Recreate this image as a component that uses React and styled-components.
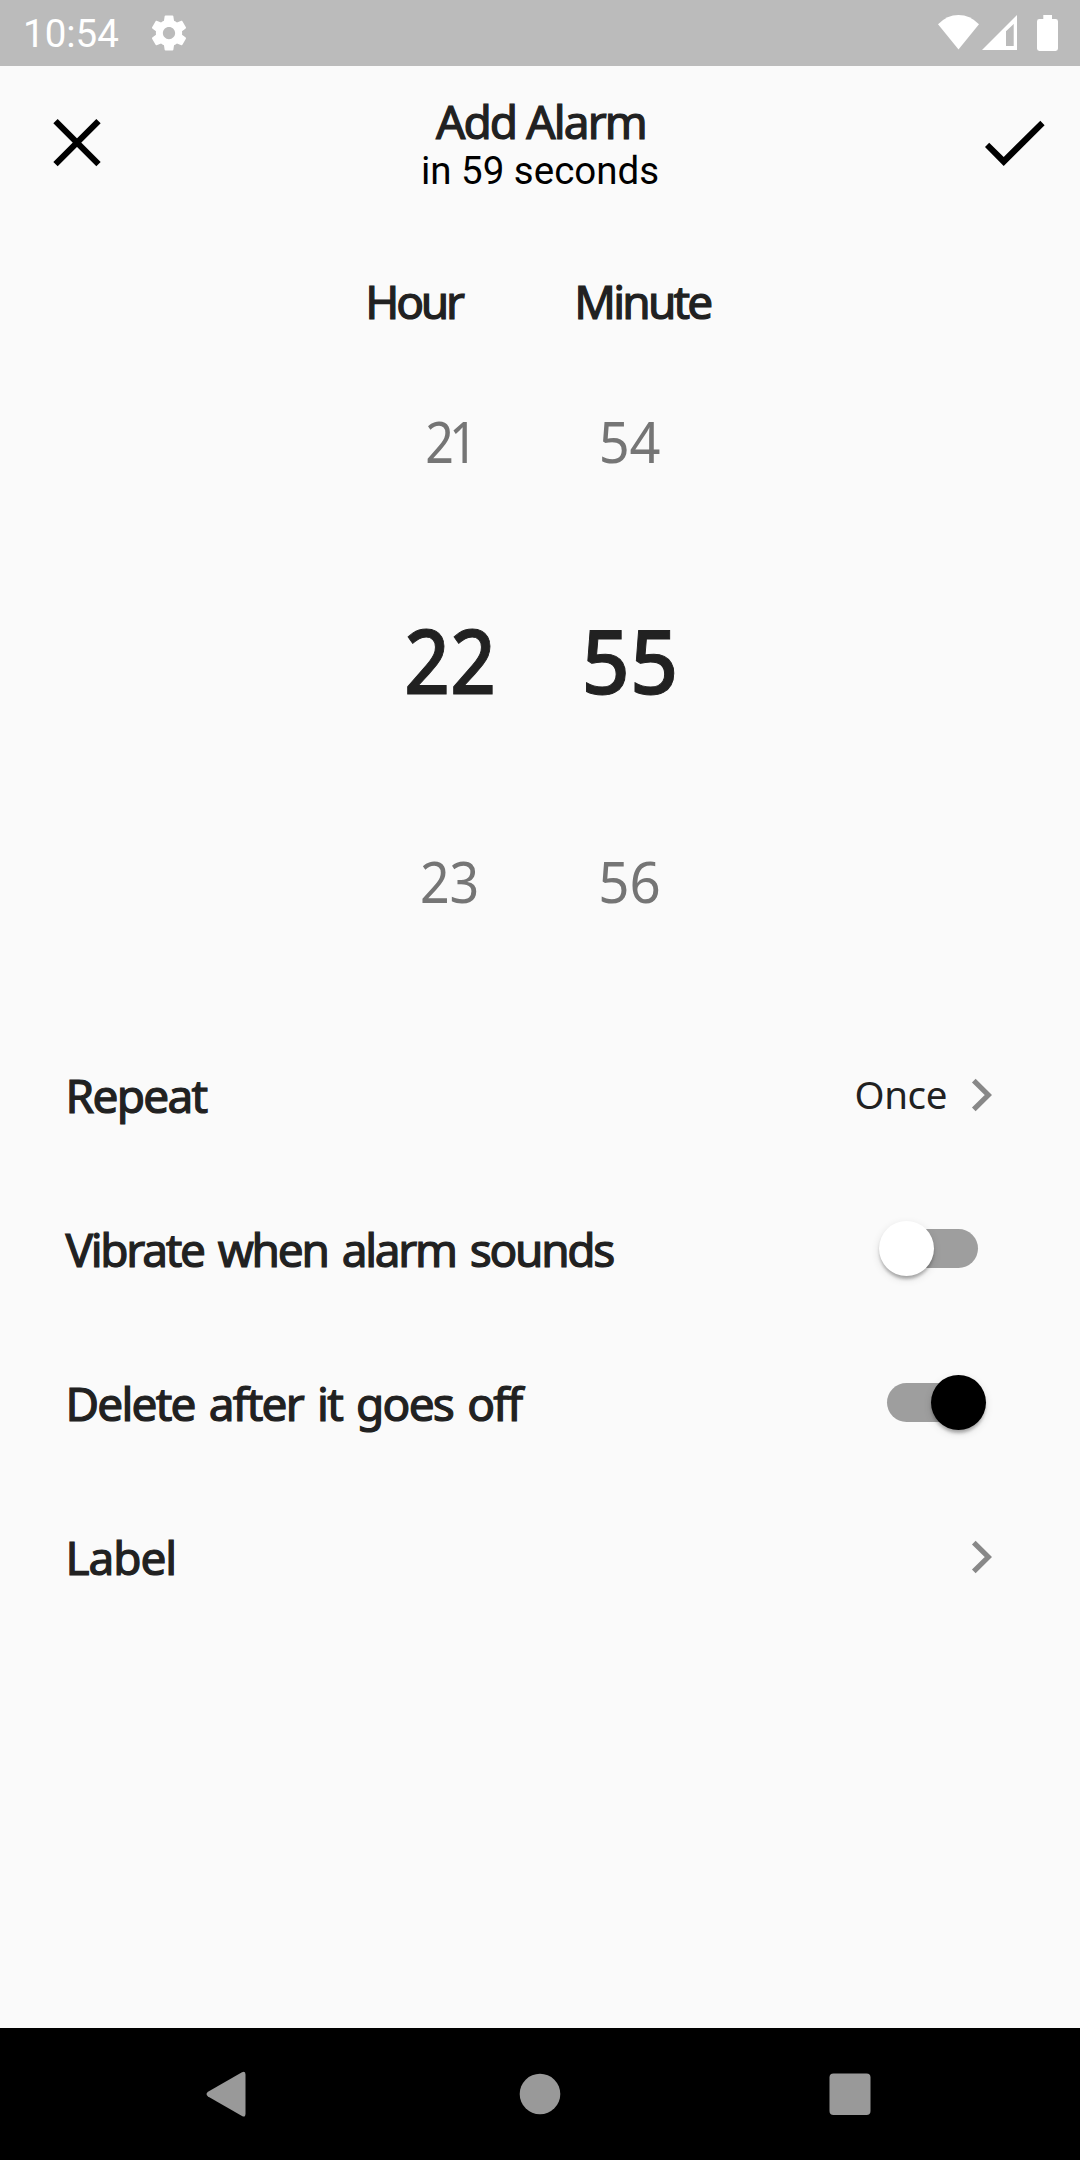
import React, { useState } from "react";
import styled, { createGlobalStyle } from "styled-components";

const GlobalStyle = createGlobalStyle`
  * { box-sizing: border-box; }
  body {
    margin: 0;
    background: #fafafa;
    color: #212121;
    font-family: "Noto Sans", "Open Sans", sans-serif;
  }
`;

const Screen = styled.div`
  width: 1080px;
  height: 2160px;
  display: flex;
  flex-direction: column;
  background: #fafafa;
  overflow: hidden;
`;

const StatusBar = styled.div`
  height: 66px;
  flex: none;
  display: flex;
  align-items: center;
  justify-content: space-between;
  padding: 0 22px 0 23px;
  background: #bbbbbb;
`;

const StatusGroup = styled.div`
  display: flex;
  align-items: center;
`;

const Clock = styled.span`
  font: 400 38.5px/66px Roboto, sans-serif;
  color: #fff;
  padding-top: 2px;
  width: 124.5px;
`;

const Icon = styled.svg`
  display: block;
  flex: none;
  fill: ${(p) => p.$fill || "none"};
`;

const AppBar = styled.header`
  height: 154px;
  flex: none;
  display: flex;
  justify-content: space-between;
`;

const IconButton = styled.button`
  width: 154px;
  height: 154px;
  padding: 0;
  border: 0;
  background: none;
`;

const TitleBlock = styled.div`
  display: flex;
  flex-direction: column;
  align-items: center;
  padding-top: 28px;
`;

const Heading = styled.span`
  font-size: 46px;
  line-height: ${(p) => p.$line || 59}px;
  letter-spacing: ${(p) => p.$spacing}px;
  margin-right: ${(p) => p.$spacing}px;
  word-spacing: ${(p) => p.$words || 0}px;
  white-space: nowrap;
  -webkit-text-stroke: 1.2px #212121;
`;

const Subtitle = styled.span`
  font: 400 38.5px/45px Roboto, sans-serif;
  color: #000;
`;

const PickerHeads = styled.div`
  display: grid;
  grid-template-columns: 229px 229px;
  justify-items: center;
  padding: 52px 0 0 297.5px;
`;

const Picker = styled.div`
  display: grid;
  grid-template-columns: 180px 180px;
  justify-content: center;
`;

const Wheel = styled.div`
  display: flex;
  flex-direction: column;
`;

const WheelItem = styled.div`
  height: 220px;
  display: flex;
  align-items: center;
  justify-content: center;
  font-size: ${(p) => (p.$active ? 89 : 57)}px;
  font-weight: ${(p) => (p.$active ? 500 : 400)};
  line-height: 1.3;
  padding-bottom: ${(p) => (p.$active ? 3 : 0)}px;
  color: ${(p) => (p.$active ? "#212121" : "#757575")};
  -webkit-text-stroke: ${(p) => (p.$active ? 1 : 0)}px #212121;
`;

const Digits = styled.span`
  letter-spacing: ${(p) => p.$spacing || 0}px;
  margin-right: ${(p) => (p.$spacing ? 2 : 0)}px;
  transform: scaleX(${(p) => p.$stretch});
`;

const Settings = styled.main`
  flex: 1;
  padding: 27px 80px 0 65.5px;
`;

const SettingRow = styled.div`
  height: 154px;
  display: flex;
  align-items: center;
  justify-content: space-between;
`;

const RowEnd = styled.div`
  display: flex;
  align-items: center;
  gap: 17px;
`;

const RowValue = styled.span`
  font-size: 38.5px;
  line-height: 52px;
  letter-spacing: -0.4px;
  padding-bottom: 2px;
`;

const Track = styled.button`
  position: relative;
  width: 91px;
  height: 39px;
  margin: 0 22px 1px 0;
  padding: 0;
  border: 0;
  border-radius: 20px;
  background: #9e9e9e;
`;

const Thumb = styled.span`
  position: absolute;
  top: -8px;
  left: ${(p) => (p.$on ? 44.3 : -8)}px;
  width: 55px;
  height: 55px;
  border-radius: 50%;
  background: ${(p) => (p.$on ? "#000" : "#fff")};
  box-shadow: 0 5px 4px -3px rgba(0, 0, 0, 0.2), 0 3px 3px rgba(0, 0, 0, 0.14),
    0 3px 8px rgba(0, 0, 0, 0.12);
`;

const NavBar = styled.nav`
  height: 132px;
  flex: none;
  display: grid;
  grid-template-columns: repeat(3, 310px);
  justify-content: center;
  align-items: center;
  justify-items: center;
  background: #000;
`;

const hours = [
  { text: "21", stretch: 0.88, spacing: -5.5 },
  { text: "22", stretch: 0.9 },
  { text: "23", stretch: 0.91 },
];
const minutes = [
  { text: "54", stretch: 0.95 },
  { text: "55", stretch: 0.95 },
  { text: "56", stretch: 0.96 },
];

function WheelColumn({ values }) {
  return (
    <Wheel>
      {values.map((v, i) => (
        <WheelItem key={v.text} $active={i === 1}>
          <Digits $stretch={v.stretch} $spacing={v.spacing}>{v.text}</Digits>
        </WheelItem>
      ))}
    </Wheel>
  );
}

function Chevron() {
  return (
    <Icon width="36" height="40" viewBox="0 0 36 40">
      <path d="M9.8 5.7L24.3 20L9.8 34.3" stroke="#888" strokeWidth="5.2" />
    </Icon>
  );
}

function Switch({ initial }) {
  const [on, setOn] = useState(initial);
  return (
    <Track role="switch" aria-checked={on} onClick={() => setOn(!on)}>
      <Thumb $on={on} />
    </Track>
  );
}

export default function App() {
  return (
    <Screen>
      <GlobalStyle />
      <StatusBar>
        <StatusGroup>
          <Clock>10:54</Clock>
          <Icon $fill="#fff" width="42" height="42" viewBox="0 0 24 24">
            <path d="M19.43 12.98c.04-.32.07-.64.07-.98s-.03-.66-.07-.98l2.11-1.65c.19-.15.24-.42.12-.64l-2-3.46c-.12-.22-.39-.3-.61-.22l-2.49 1c-.52-.4-1.08-.73-1.69-.98l-.38-2.65C14.46 2.18 14.25 2 14 2h-4c-.25 0-.46.18-.49.42l-.38 2.65c-.61.25-1.17.59-1.69.98l-2.49-1c-.23-.09-.49 0-.61.22l-2 3.46c-.13.22-.07.49.12.64l2.11 1.65c-.04.32-.07.65-.07.98s.03.66.07.98l-2.11 1.65c-.19.15-.24.42-.12.64l2 3.46c.12.22.39.3.61.22l2.49-1c.52.4 1.08.73 1.69.98l.38 2.65c.03.24.24.42.49.42h4c.25 0 .46-.18.49-.42l.38-2.65c.61-.25 1.17-.59 1.69-.98l2.49 1c.23.09.49 0 .61-.22l2-3.46c.12-.22.07-.49-.12-.64l-2.11-1.65zM12 15.5c-1.93 0-3.5-1.57-3.5-3.5s1.57-3.5 3.5-3.5 3.5 1.57 3.5 3.5-1.57 3.5-3.5 3.5z" />
          </Icon>
        </StatusGroup>
        <Icon $fill="#fff" width="122" height="66" viewBox="936 0 122 66">
          <path d="M938 24.3Q947 15 958.5 15T979 24.3L958.5 49.5Z" />
          <path fillRule="evenodd" d="M982 50L1017 15V50ZM1006 46H1013.7V24L1006 31.3Z" />
          <path d="M1043.3 15H1052V19H1055.6Q1058 19 1058 21.4V48.6Q1058 51 1055.6 51H1039.4Q1037 51 1037 48.6V21.4Q1037 19 1039.4 19H1043.3Z" />
        </Icon>
      </StatusBar>

      <AppBar>
        <IconButton aria-label="Close">
          <Icon width="154" height="154" viewBox="0 0 154 154">
            <path d="M55.5 55.2L98.5 98.2M98.5 55.2L55.5 98.2" stroke="#000" strokeWidth="6.1" />
          </Icon>
        </IconButton>
        <TitleBlock>
          <Heading $line={54} $spacing={-1.9}>Add Alarm</Heading>
          <Subtitle>in 59 seconds</Subtitle>
        </TitleBlock>
        <IconButton aria-label="Save">
          <Icon $fill="#000" width="154" height="154" viewBox="926 66 154 154">
            <path d="M985 147L989.2 142.8L1003.7 157L1040.3 120.7L1044.6 125.2L1003.7 166Z" />
          </Icon>
        </IconButton>
      </AppBar>

      <PickerHeads>
        <Heading $spacing={-3.2}>Hour</Heading>
        <Heading $spacing={-2.8}>Minute</Heading>
      </PickerHeads>
      <Picker>
        <WheelColumn values={hours} />
        <WheelColumn values={minutes} />
      </Picker>

      <Settings>
        <SettingRow>
          <Heading $spacing={-1.7}>Repeat</Heading>
          <RowEnd>
            <RowValue>Once</RowValue>
            <Chevron />
          </RowEnd>
        </SettingRow>
        <SettingRow>
          <Heading $spacing={-2.3} $words={4.5}>Vibrate when alarm sounds</Heading>
          <Switch initial={false} />
        </SettingRow>
        <SettingRow>
          <Heading $spacing={-1.8} $words={4}>Delete after it goes off</Heading>
          <Switch initial={true} />
        </SettingRow>
        <SettingRow>
          <Heading $spacing={-1.1}>Label</Heading>
          <Chevron />
        </SettingRow>
      </Settings>

      <NavBar>
        <Icon $fill="#999" width="48" height="48" viewBox="205.5 2070.5 48 48">
          <path d="M207.5 2092.2L241.5 2072.8Q245 2071 245 2075V2114Q245 2118.5 241.5 2116.5L207.5 2097Q204.5 2094.6 207.5 2092.2Z" />
        </Icon>
        <Icon $fill="#999" width="42" height="42" viewBox="0 0 42 42">
          <circle cx="21" cy="21" r="20.3" />
        </Icon>
        <Icon $fill="#999" width="42" height="42" viewBox="0 0 42 42">
          <rect x="0.5" y="0.5" width="41" height="41.5" rx="4" />
        </Icon>
      </NavBar>
    </Screen>
  );
}
